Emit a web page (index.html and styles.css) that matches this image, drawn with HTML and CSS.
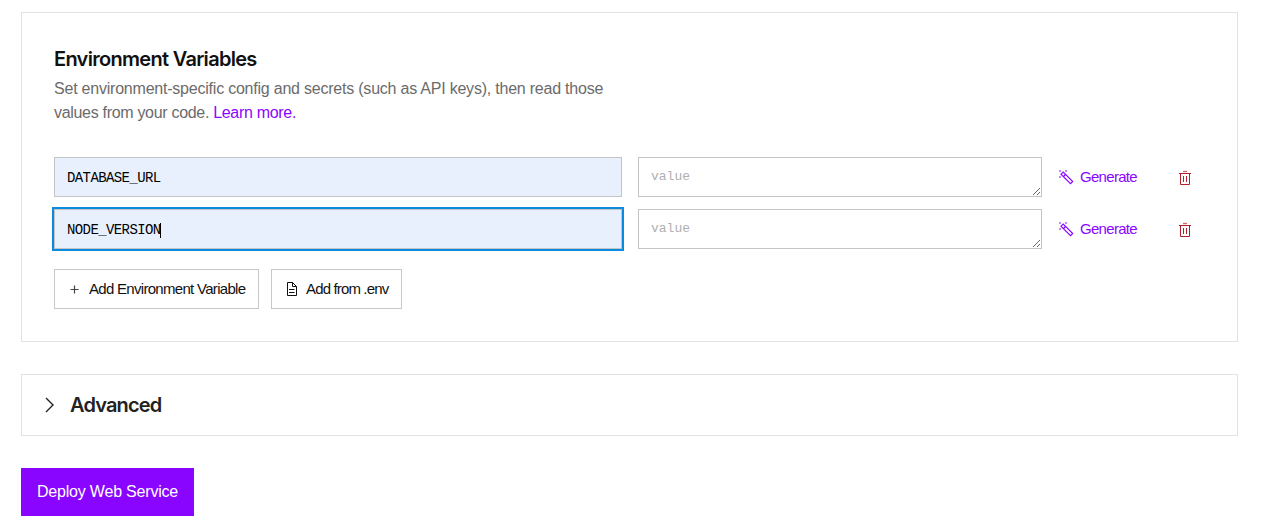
FILE: index.html
```html
<!DOCTYPE html>
<html lang="en">
<head>
<meta charset="utf-8">
<title>Deploy Web Service</title>
<link rel="stylesheet" href="styles.css">
</head>
<body>
<svg class="sprite" width="0" height="0" aria-hidden="true">
  <symbol id="wand" viewBox="0 0 16 16">
    <path d="M3 5.2 5.2 3 14.7 12.5 12.5 14.7ZM5.5 7.5 7.5 5.5" fill="none" stroke="#8a05ff" stroke-width="1.15"/>
    <path d="M1 1h2v2H1zM7 1h2v2H7zM1 7h2v2H1z" fill="#8a05ff" opacity=".5"/>
  </symbol>
  <symbol id="trash" viewBox="0 0 12 16">
    <path d="M4 1.5h4" fill="none" stroke="#b3202c" stroke-width="1.4" opacity=".65"/>
    <path d="M0 3.5h12M1.5 3.5v11h9v-11M4.5 6v6M7.5 6v6" fill="none" stroke="#b3202c"/>
  </symbol>
</svg>
<main class="page">
  <section class="panel">
    <h2 class="title"><span>Environment Variables</span></h2>
    <p class="description"><span class="line-one">Set environment-specific config and secrets (such as API keys), then read those</span><br><span class="line-two">values from your code. <a class="link">Learn more.</a></span></p>
    <div class="rows">
      <div class="row">
        <div class="key"><span>DATABASE_URL</span></div>
        <textarea class="value" placeholder="value"></textarea>
        <button class="generate"><svg width="16" height="16"><use href="#wand"/></svg><span>Generate</span></button>
        <button class="remove" aria-label="Remove"><svg width="12" height="16"><use href="#trash"/></svg></button>
      </div>
      <div class="row">
        <div class="key focused"><span>NODE_VERSION</span><i class="caret"></i></div>
        <textarea class="value" placeholder="value"></textarea>
        <button class="generate"><svg width="16" height="16"><use href="#wand"/></svg><span>Generate</span></button>
        <button class="remove" aria-label="Remove"><svg width="12" height="16"><use href="#trash"/></svg></button>
      </div>
    </div>
    <div class="actions">
      <button class="outline add"><svg width="9" height="9" viewBox="0 0 9 9"><path d="M4.5 .5v8M.5 4.5h8" fill="none" stroke="#444" stroke-width="1.2"/></svg><span class="add-label">Add Environment Variable</span></button>
      <button class="outline file"><svg width="12" height="14" viewBox="0 0 12 14"><path d="M1.5.5h5l4 4v9h-9zM6.5.5v4h4M3 7.5h5.5M3 10.5h5.5" fill="none" stroke="#111"/></svg><span class="file-label">Add from .env</span></button>
    </div>
  </section>
  <section class="advanced">
    <svg width="10" height="16" viewBox="0 0 10 16"><path d="M1 1l7 7-7 7" fill="none" stroke="#222" stroke-width="1.4"/></svg>
    <h2 class="advanced-title"><span>Advanced</span></h2>
  </section>
  <button class="deploy"><span>Deploy Web Service</span></button>
</main>
</body>
</html>
```
FILE: styles.css
```css
* { box-sizing: border-box; }
body {
  margin: 0;
  background: #fff;
  color: #111;
  font-family: "Liberation Sans", Arial, sans-serif;
  overflow: hidden;
}
button { font: inherit; color: inherit; background: none; border: 0; padding: 0; white-space: nowrap; }
svg { display: block; flex: none; }
.sprite { position: absolute; }
.page { padding: 12px 25px 0 21px; }
.panel { height: 330px; border: 1px solid #e3e3e3; padding: 32px; }
.title { margin: 0; font: 600 20px/28px Inter, sans-serif; letter-spacing: -0.7px; }
.description { margin: 4px 0 0; font-size: 16px; line-height: 24px; color: #6b6b6b; white-space: nowrap; }
.line-one { letter-spacing: -0.22px; }
.line-two { letter-spacing: -0.31px; }
.link { color: #8a05ff; }
.rows { margin-top: 32px; display: flex; flex-direction: column; gap: 12px; }
.row { display: flex; height: 40px; align-items: center; }
.key {
  width: 568px; height: 40px; margin-right: 16px; padding: 2px 12px 0;
  border: 1px solid #c4c4c4; background: #e8f0fe;
  display: flex; align-items: center;
  font: 14px/20px "Liberation Mono", monospace; letter-spacing: -0.6px; color: #000;
}
.focused { outline: 2px solid #0a8be0; }
.caret { width: 1px; height: 15px; margin-left: -1px; background: #000; }
.value {
  width: 404px; height: 40px; margin: 0; padding: 9px 12px 7px;
  border: 1px solid #c4c4c4; border-radius: 0; background: #fff; outline: 0;
  font: 13px/20px "Liberation Mono", monospace; overflow: hidden; resize: both;
}
.value::placeholder { color: #b0b0b0; }
.generate { margin-left: 16px; width: 121px; display: flex; align-items: center; gap: 6px; color: #8a05ff; font-size: 15px; line-height: 20px; letter-spacing: -0.7px; }
.remove { padding-top: 2px; }
.actions { margin-top: 20px; display: flex; gap: 12px; }
.outline { height: 40px; border: 1px solid #c8c8c8; display: flex; align-items: center; font-size: 15px; line-height: 20px; letter-spacing: -0.7px; }
.add { width: 205px; padding-left: 15px; gap: 10px; }
.file { width: 131px; padding-left: 14px; gap: 8px; letter-spacing: -0.85px; }
.advanced { margin-top: 32px; height: 62px; border: 1px solid #e3e3e3; padding-left: 23px; display: flex; align-items: center; gap: 15px; }
.advanced-title { margin: 0; font: 600 20px/28px Inter, sans-serif; letter-spacing: -0.85px; color: #222; }
.deploy { display: block; margin-top: 32px; width: 173px; height: 48px; padding-left: 16px; background: #8a05ff; color: #fff; text-align: left; font-size: 16px; letter-spacing: -0.2px; }
```
